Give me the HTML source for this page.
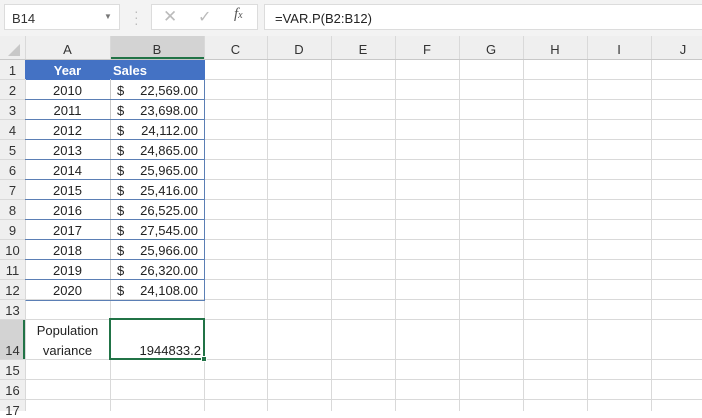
<!DOCTYPE html><html><head><style>
body{margin:0;width:702px;height:411px;overflow:hidden;background:#fff;font-family:"Liberation Sans",sans-serif;font-size:13px;color:#222;position:relative}
div{position:absolute;box-sizing:border-box}
.v{width:1px;background:#d9d9d9;top:36px;height:375px}
.h{height:1px;background:#d9d9d9;left:0;width:702px}
.ch{top:42px;height:18px;text-align:center;color:#333;font-size:13px}
.rh{left:0;width:25px;text-align:center;color:#333;font-size:13px}
.y{left:25px;width:85px;text-align:center}
.s{left:117px}
.n{left:130px;width:68px;text-align:right}
</style></head><body>
<div style="left:0;top:0;width:702px;height:36px;background:#f3f3f3"></div>
<div style="left:4px;top:4px;width:116px;height:26px;background:#fff;border:1px solid #dcdcdc;padding:6px 0 0 7px;color:#333">B14</div>
<div style="left:104px;top:12px;color:#777;font-size:8px">▼</div>
<div style="left:134px;top:8px;color:#bbb;font-size:14px;line-height:6px">·<br>·<br>·</div>
<div style="left:151px;top:4px;width:107px;height:26px;background:#fff;border:1px solid #dcdcdc"></div>
<div style="left:163px;top:7px;color:#bbb;font-size:17px">✕</div>
<div style="left:198px;top:7px;color:#bbb;font-size:16px">✓</div>
<div style="left:234px;top:6px;color:#555;font-family:'Liberation Serif',serif;font-style:italic;font-size:15px">f<span style="font-size:10px">x</span></div>
<div style="left:264px;top:4px;width:440px;height:26px;background:#fff;border:1px solid #dcdcdc;padding:6px 0 0 10px;color:#222">=VAR.P(B2:B12)</div>
<div style="left:0;top:36px;width:702px;height:23px;background:#efefef"></div>
<div style="left:0;top:59px;width:25px;height:352px;background:#efefef"></div>
<div style="left:110px;top:36px;width:94px;height:23px;background:#d3d3d3;border-bottom:2px solid #217346"></div>
<div style="left:0;top:319px;width:25px;height:40px;background:#d3d3d3;border-right:2px solid #217346"></div>
<div style="left:8px;top:44px;width:0;height:0;border-left:12px solid transparent;border-bottom:12px solid #c8c8c8"></div>
<div class="v" style="left:25px"></div><div class="v" style="left:110px"></div><div class="v" style="left:204px"></div><div class="v" style="left:267px"></div><div class="v" style="left:331px"></div><div class="v" style="left:395px"></div><div class="v" style="left:459px"></div><div class="v" style="left:523px"></div><div class="v" style="left:587px"></div><div class="v" style="left:651px"></div>
<div class="h" style="top:59px;background:#c8c8c8"></div>
<div class="h" style="top:79px"></div><div class="h" style="top:99px"></div><div class="h" style="top:119px"></div><div class="h" style="top:139px"></div><div class="h" style="top:159px"></div><div class="h" style="top:179px"></div><div class="h" style="top:199px"></div><div class="h" style="top:219px"></div><div class="h" style="top:239px"></div><div class="h" style="top:259px"></div><div class="h" style="top:279px"></div><div class="h" style="top:299px"></div><div class="h" style="top:319px"></div><div class="h" style="top:359px"></div><div class="h" style="top:379px"></div><div class="h" style="top:399px"></div>
<div class="ch" style="left:25px;width:85px">A</div><div class="ch" style="left:110px;width:94px">B</div><div class="ch" style="left:204px;width:63px">C</div><div class="ch" style="left:267px;width:64px">D</div><div class="ch" style="left:331px;width:64px">E</div><div class="ch" style="left:395px;width:64px">F</div><div class="ch" style="left:459px;width:64px">G</div><div class="ch" style="left:523px;width:64px">H</div><div class="ch" style="left:587px;width:64px">I</div><div class="ch" style="left:651px;width:64px">J</div>
<div style="left:25px;top:60px;width:180px;height:20px;background:#4472c4"></div>
<div style="left:25px;top:79px;width:180px;height:222px;border:1px solid #5b7fb5;border-top:none;border-left-color:#d9d9d9"></div>
<div style="left:110px;top:79px;width:1px;height:221px;background:#c8c8c8"></div>
<div style="left:25px;top:99px;width:180px;height:1px;background:#5b7fb5"></div><div style="left:25px;top:119px;width:180px;height:1px;background:#5b7fb5"></div><div style="left:25px;top:139px;width:180px;height:1px;background:#5b7fb5"></div><div style="left:25px;top:159px;width:180px;height:1px;background:#5b7fb5"></div><div style="left:25px;top:179px;width:180px;height:1px;background:#5b7fb5"></div><div style="left:25px;top:199px;width:180px;height:1px;background:#5b7fb5"></div><div style="left:25px;top:219px;width:180px;height:1px;background:#5b7fb5"></div><div style="left:25px;top:239px;width:180px;height:1px;background:#5b7fb5"></div><div style="left:25px;top:259px;width:180px;height:1px;background:#5b7fb5"></div><div style="left:25px;top:279px;width:180px;height:1px;background:#5b7fb5"></div>
<div class="y" style="top:63px;color:#fff;font-weight:bold">Year</div><div style="left:113px;top:63px;color:#fff;font-weight:bold">Sales</div>
<div class="rh" style="top:63px">1</div>
<div class="rh" style="top:83px">2</div><div class="y" style="top:83px">2010</div><div class="s" style="top:83px">$</div><div class="n" style="top:83px">22,569.00</div>
<div class="rh" style="top:103px">3</div><div class="y" style="top:103px">2011</div><div class="s" style="top:103px">$</div><div class="n" style="top:103px">23,698.00</div>
<div class="rh" style="top:123px">4</div><div class="y" style="top:123px">2012</div><div class="s" style="top:123px">$</div><div class="n" style="top:123px">24,112.00</div>
<div class="rh" style="top:143px">5</div><div class="y" style="top:143px">2013</div><div class="s" style="top:143px">$</div><div class="n" style="top:143px">24,865.00</div>
<div class="rh" style="top:163px">6</div><div class="y" style="top:163px">2014</div><div class="s" style="top:163px">$</div><div class="n" style="top:163px">25,965.00</div>
<div class="rh" style="top:183px">7</div><div class="y" style="top:183px">2015</div><div class="s" style="top:183px">$</div><div class="n" style="top:183px">25,416.00</div>
<div class="rh" style="top:203px">8</div><div class="y" style="top:203px">2016</div><div class="s" style="top:203px">$</div><div class="n" style="top:203px">26,525.00</div>
<div class="rh" style="top:223px">9</div><div class="y" style="top:223px">2017</div><div class="s" style="top:223px">$</div><div class="n" style="top:223px">27,545.00</div>
<div class="rh" style="top:243px">10</div><div class="y" style="top:243px">2018</div><div class="s" style="top:243px">$</div><div class="n" style="top:243px">25,966.00</div>
<div class="rh" style="top:263px">11</div><div class="y" style="top:263px">2019</div><div class="s" style="top:263px">$</div><div class="n" style="top:263px">26,320.00</div>
<div class="rh" style="top:283px">12</div><div class="y" style="top:283px">2020</div><div class="s" style="top:283px">$</div><div class="n" style="top:283px">24,108.00</div>
<div class="rh" style="top:303px">13</div>
<div class="rh" style="top:343px">14</div>
<div class="y" style="top:323px">Population</div><div class="y" style="top:343px">variance</div>
<div style="left:109px;top:318px;width:96px;height:42px;border:2px solid #217346"></div>
<div style="left:201px;top:356px;width:6px;height:6px;background:#217346;border:1px solid #fff"></div>
<div style="left:112px;top:343px;width:89px;text-align:right">1944833.2</div>
<div class="rh" style="top:363px">15</div><div class="rh" style="top:383px">16</div><div class="rh" style="top:403px">17</div>
</body></html>
